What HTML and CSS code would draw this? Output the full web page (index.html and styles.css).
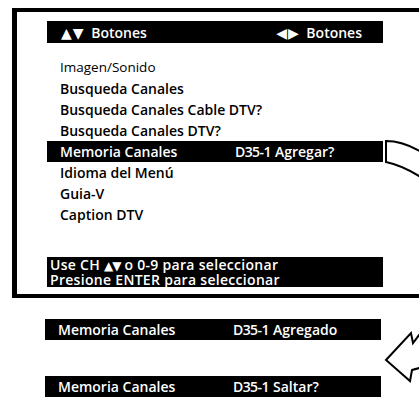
FILE: index.html
```html
<!DOCTYPE html>
<html lang="es">
<head>
    <meta charset="UTF-8">
    <meta name="viewport" content="width=device-width, initial-scale=1.0">
    <title>Memoria Canales</title>
    <link rel="stylesheet" href="styles.css">
</head>
<body>
    <div class="screen">
        <div class="menu-box">
            <div class="bar header-bar">
                <span><span class="tri">▲▼</span> Botones</span>
                <span><span class="tri">◀▶</span> Botones</span>
            </div>

            <ul class="menu-list">
                <li class="light">Imagen/Sonido</li>
                <li>Busqueda Canales</li>
                <li>Busqueda Canales Cable DTV?</li>
                <li>Busqueda Canales DTV?</li>
                <li class="bar channel-row">
                    <span class="ch-name">Memoria Canales</span>
                    <span class="ch-num">D35-1</span>
                    <span class="ch-state">Agregar?</span>
                </li>
                <li>Idioma del Menú</li>
                <li>Guia-V</li>
                <li>Caption DTV</li>
            </ul>

            <div class="bar help-bar">
                <div>Use CH <span class="tri small">▲▼</span> o 0-9 para seleccionar</div>
                <div>Presione ENTER para seleccionar</div>
            </div>
        </div>

        <div class="states">
            <div class="bar channel-row">
                <span class="ch-name">Memoria Canales</span>
                <span class="ch-num">D35-1</span>
                <span class="ch-state">Agregado</span>
            </div>
            <div class="bar channel-row">
                <span class="ch-name">Memoria Canales</span>
                <span class="ch-num">D35-1</span>
                <span class="ch-state">Saltar?</span>
            </div>
        </div>

        <!-- curved arrows drawn over the right edge -->
        <svg class="arrows" width="419" height="397" viewBox="0 0 419 397">
            <path d="M386 141 C400 141 413 146 428 156 L428 182 C414 172 400 165 386 162 Z"
                  fill="#fff" stroke="#000" stroke-width="2"/>
            <path d="M430 336 L419 335 L413 343 L411 333 L386 360 L410 381 L412 370 C418 368 424 367 430 366"
                  fill="#fff" stroke="#000" stroke-width="2" stroke-linejoin="miter"/>
        </svg>
    </div>
</body>
</html>
```

FILE: styles.css
```css
html, body {
    margin: 0;
    overflow: hidden;
}
body {
    background-color: #fff;
    font-family: "Open Sans", "DejaVu Sans", sans-serif;
    color: #000;
}
.screen {
    position: relative;
    width: 419px;
    height: 397px;
    padding-top: 8px;
    box-sizing: border-box;
}
.menu-box {
    margin-left: 12px;
    width: 440px;
    border-top: 4px solid #000;
    border-left: 5px solid #000;
    border-bottom: 4px solid #000;
    padding: 9px 0 7px 30px;
    box-sizing: border-box;
}
.bar {
    background-color: #000;
    color: #fff;
    width: 336px;
    box-sizing: border-box;
}
.tri {
    font-family: "DejaVu Sans", sans-serif;
    font-size: 14px;
    letter-spacing: 1px;
    margin-right: 3px;
}
.tri.small {
    font-size: 12px;
    letter-spacing: -1px;
    margin-right: 0;
}
.header-bar {
    display: flex;
    justify-content: space-between;
    align-items: center;
    height: 22px;
    padding: 0 21px 0 14px;
    font-size: 14px;
    font-weight: 600;
}
.menu-list {
    list-style: none;
    margin: 14px 0 0 0;
    padding: 0;
    font-size: 14px;
    font-weight: 600;
    line-height: 21px;
}
.menu-list li {
    padding-left: 13px;
}
.menu-list li.light {
    font-weight: 400;
    font-size: 13.5px;
}
.channel-row {
    display: flex;
    height: 21px;
    line-height: 21px;
    padding-left: 13px;
    font-size: 14px;
    font-weight: 600;
}
.ch-name {
    width: 175px;
}
.ch-num {
    width: 40px;
    letter-spacing: -0.6px;
}
.help-bar {
    margin-top: 32px;
    height: 30px;
    padding: 1px 3px;
    font-size: 14px;
    font-weight: 600;
    letter-spacing: 0.3px;
    line-height: 14px;
}
.states {
    display: flex;
    flex-direction: column;
    gap: 36px;
    margin: 21px 0 0 45px;
}
.arrows {
    position: absolute;
    left: 0;
    top: 0;
    pointer-events: none;
}
```
